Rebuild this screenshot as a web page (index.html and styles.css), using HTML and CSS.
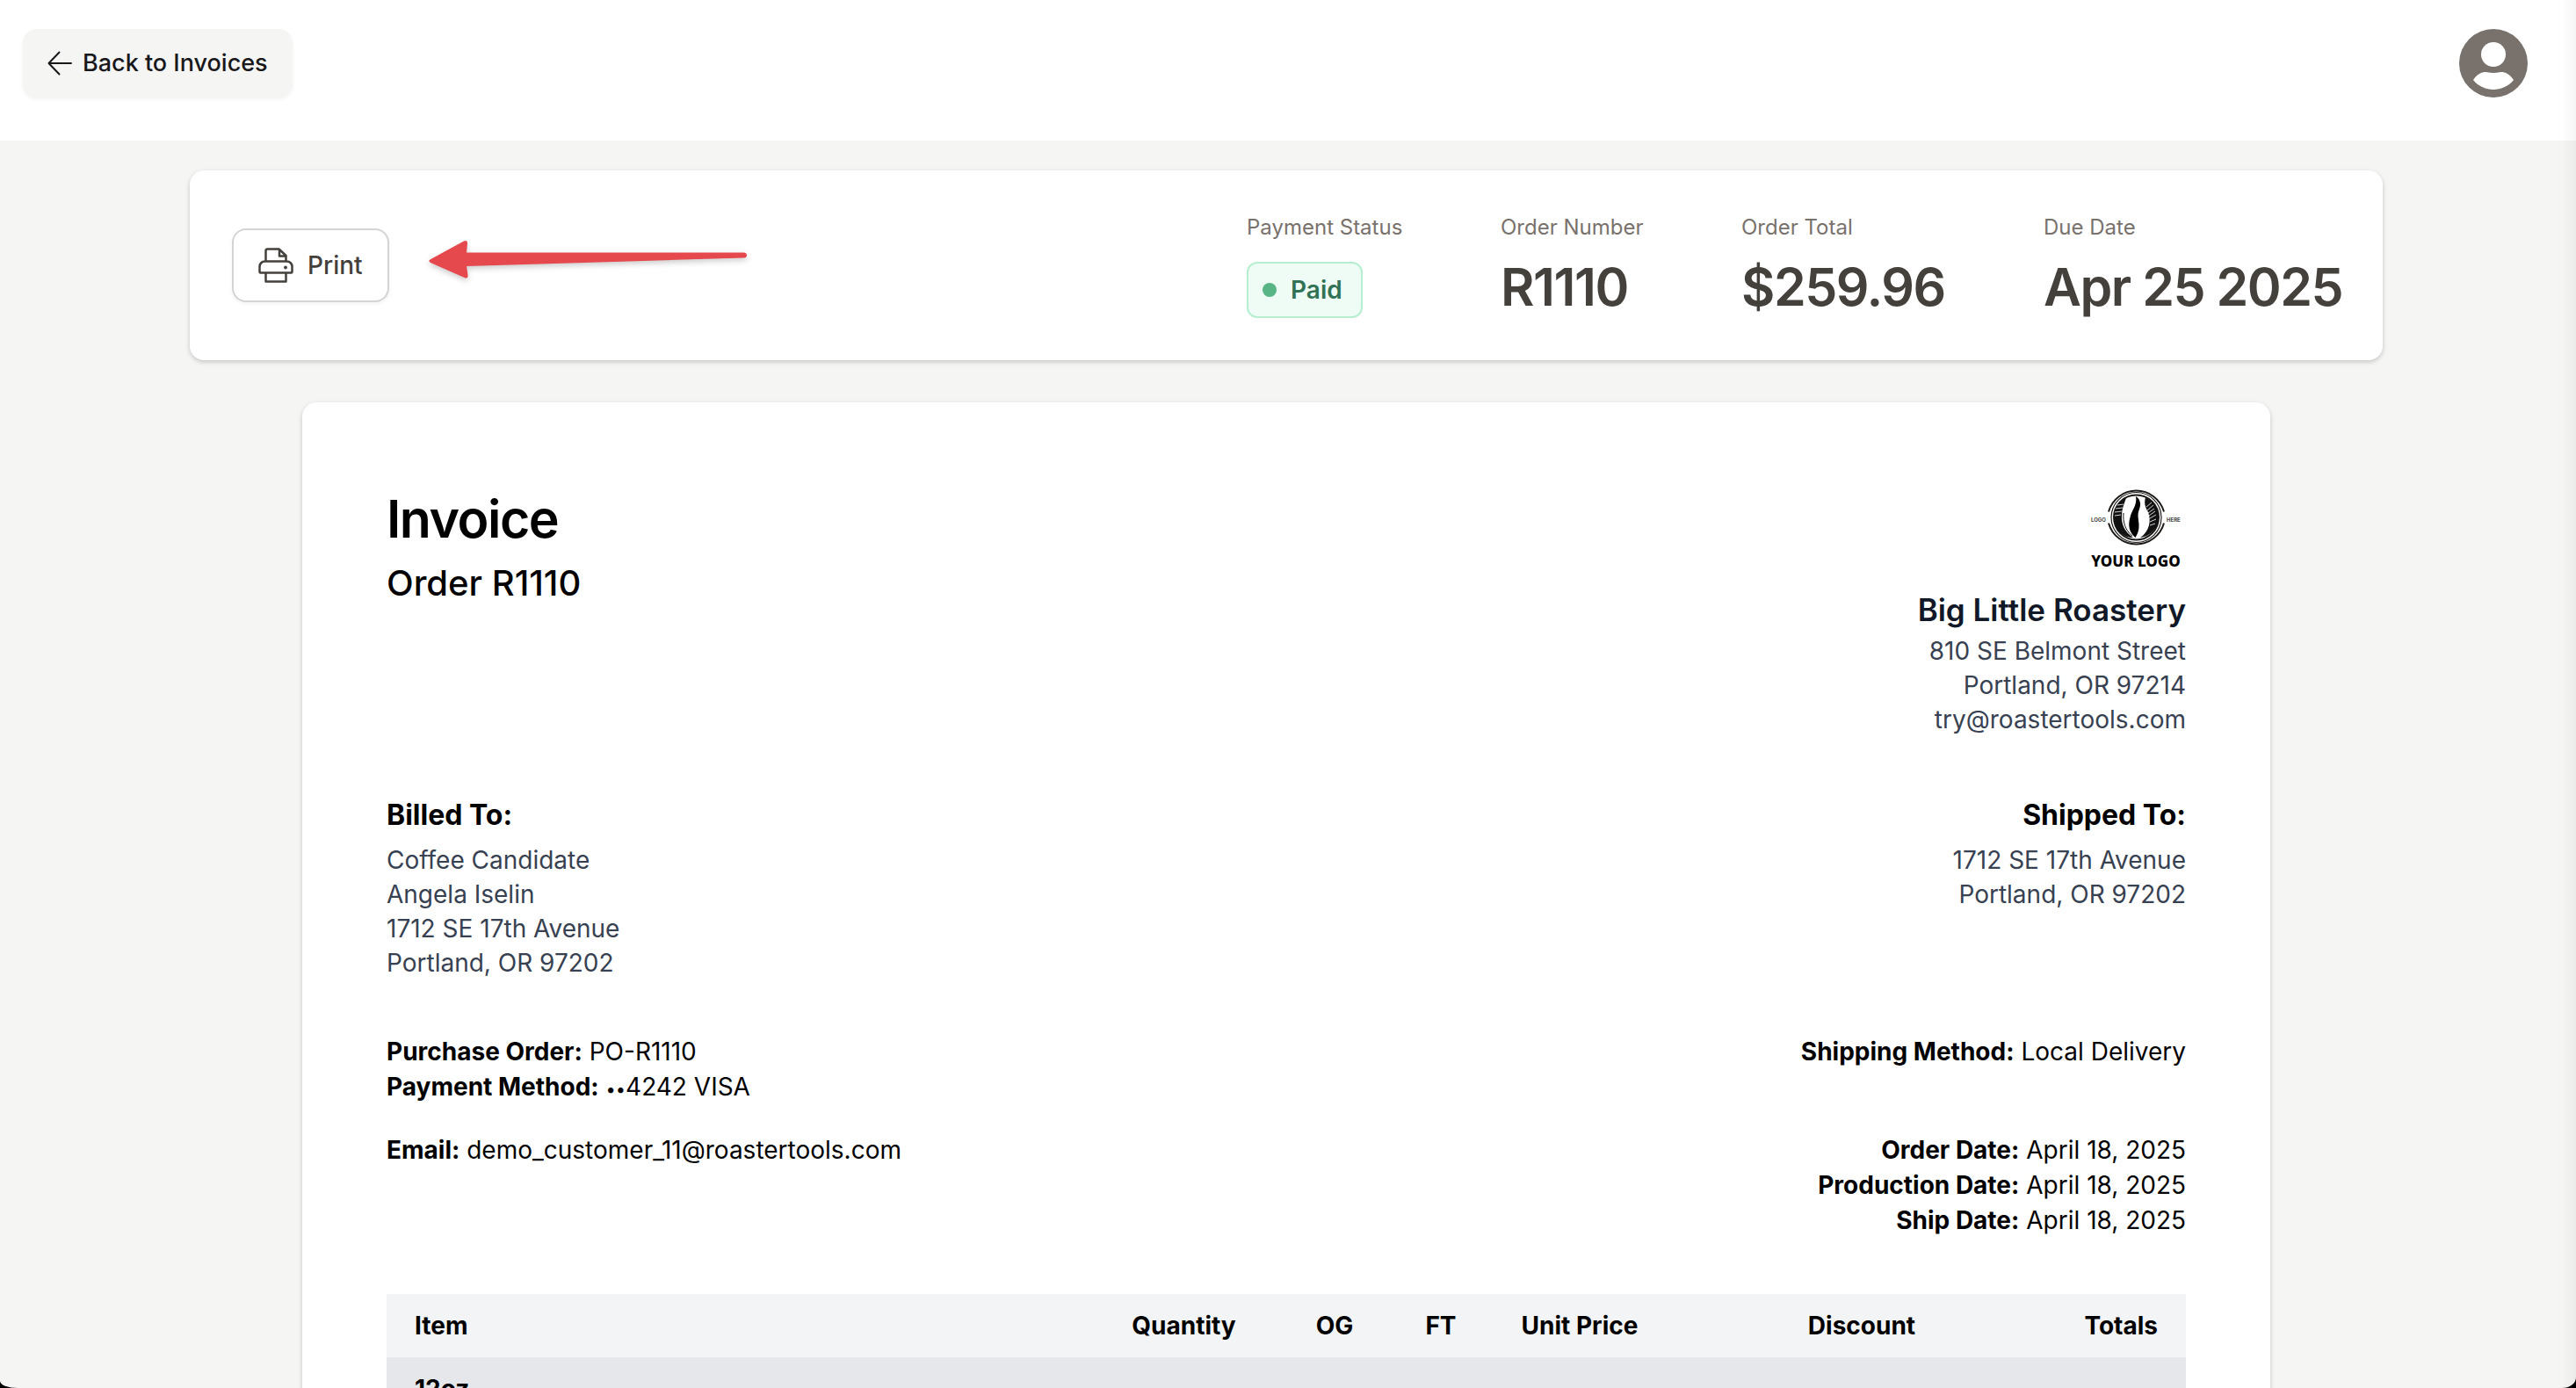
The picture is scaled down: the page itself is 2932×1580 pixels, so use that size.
FILE: index.html
```html
<!DOCTYPE html>
<html lang="en">
<head>
<meta charset="utf-8">
<meta name="viewport" content="width=device-width, initial-scale=1">
<title>Invoice R1110</title>
<link rel="stylesheet" href="styles.css">
</head>
<body>
<header class="topbar">
  <a class="back" href="#invoices">
    <svg class="back-icon" viewBox="0 0 28 28" aria-hidden="true"><path d="M27 14H1.500M13.500 1.500L1.500 14l12 12.500"/></svg>
    Back to Invoices
  </a>
  <button class="avatar" type="button" aria-label="Account">
    <svg viewBox="0 0 78 78" aria-hidden="true"><circle cx="39" cy="39" r="39" fill="#78716c"/><circle cx="39" cy="29" r="14" fill="#fff"/><path d="M16 58C21 50.500 27 48.500 32 49.200Q39 50.600 46 49.200C51 48.500 57 50.500 62 58C56 65.500 47 69 39 69S22 65.500 16 58Z" fill="#fff"/></svg>
  </button>
</header>

<main class="page">
  <section class="summary">
    <div class="actions">
      <button class="print" type="button">
        <svg class="print-icon" viewBox="0 0 40 40" aria-hidden="true"><path d="M8.500 16V3.500a2 2 0 0 1 2-2H23.500l8 7.500v7M24 2v7.500H31.500M8.500 28.500H2.500a1 1 0 0 1-1-1v-6a6 6 0 0 1 6-6h25a6 6 0 0 1 6 6v6a1 1 0 0 1-1 1h-6M8.500 28.500h23V38.500h-23z"/><circle cx="31" cy="22.500" r="1.900"/></svg>
        Print
      </button>
      <svg class="arrow" viewBox="0 0 364 52" aria-hidden="true"><path d="M2.500 23.500L41 2.500Q45 1 45 5L44 15.500H360Q363 16 363 18.500T360 21.500L44 31L45.500 41Q46 46 41.500 44L3 27Q0 25 2.500 23.500Z"/></svg>
    </div>
    <dl class="stats">
      <div><dt>Payment Status</dt><dd class="badge">Paid</dd></div>
      <div><dt>Order Number</dt><dd class="value">R1110</dd></div>
      <div><dt>Order Total</dt><dd class="value">$259.96</dd></div>
      <div><dt>Due Date</dt><dd class="value">Apr 25 2025</dd></div>
    </dl>
  </section>

  <article class="invoice">
    <div class="split head">
      <div>
        <h1>Invoice</h1>
        <p class="order">Order R1110</p>
      </div>
      <div class="right">
        <svg class="logo" viewBox="0 0 112 96" role="img" aria-label="Your Logo">
          <g fill="none" stroke="#1c1917">
            <path d="M24 28.500A32.700 32.700 0 0 1 87 28.500M24 41.500A32.700 32.700 0 0 0 87 41.500" stroke-width="2"/>
            <circle cx="55.500" cy="35" r="28.500" stroke-width="1.200"/>
            <circle cx="55.500" cy="35" r="25.500" stroke-width="2"/>
          </g>
          <g transform="translate(0 -1)">
            <path d="M44 13.500C29 20 25 44 38 54C42 57 47 59 52 59C43 53 38 44 39 33C39.500 25 42 20 44 13.500Z" fill="#111"/>
            <path d="M66 13.500C64 20 66 25 69 30C73 40 70 52 60 59C69 58 78 51 80 42C83 29 77 18 66 13.500Z" fill="#111"/>
            <path d="M55 12C61 16 61 22 58.500 28C55 37 63 46 54.500 59C47 53 46 44 48.500 36C50 28 57 22 55 12Z" fill="#000"/>
            <path d="M41 31C40 41 43 51 51 57" fill="none" stroke="#111"/>
            <path d="M67 24l6-5M68 28l7-6M69 31l7-5M70 34l7-5M71 37l7-4M71 41l7-3M71 45l6-2M34 22l7-1M32 26l8-1M31 30l8-1M31 34l7-1" fill="none" stroke="#fff" stroke-width=".8"/>
          </g>
          <text class="logo-side" x="4" y="40">LOGO</text>
          <text class="logo-side" x="90" y="40">HERE</text>
          <text class="logo-name" x="55" y="91" text-anchor="middle">YOUR LOGO</text>
        </svg>
        <h2 class="company">Big Little Roastery</h2>
        <address>810 SE Belmont Street<br>Portland, OR 97214<br>try@roastertools.com</address>
      </div>
    </div>

    <div class="split parties">
      <div>
        <h3>Billed To:</h3>
        <address>Coffee Candidate<br>Angela Iselin<br>1712 SE 17th Avenue<br>Portland, OR 97202</address>
      </div>
      <div class="right">
        <h3>Shipped To:</h3>
        <address>1712 SE 17th Avenue<br>Portland, OR 97202</address>
      </div>
    </div>

    <div class="split methods">
      <div>
        <p><b>Purchase Order:</b> PO-R1110</p>
        <p><b>Payment Method:</b> <span class="mask">••</span>4242 VISA</p>
      </div>
      <div class="right">
        <p><b>Shipping Method:</b> Local Delivery</p>
      </div>
    </div>

    <div class="split dates">
      <div>
        <p><b>Email:</b> demo_customer_11@roastertools.com</p>
      </div>
      <div class="right">
        <p><b>Order Date:</b> April 18, 2025</p>
        <p><b>Production Date:</b> April 18, 2025</p>
        <p><b>Ship Date:</b> April 18, 2025</p>
      </div>
    </div>

    <table class="items">
      <colgroup><col><col class="c-qty"><col class="c-og"><col class="c-ft"><col class="c-unit"><col class="c-disc"><col class="c-total"></colgroup>
      <thead>
        <tr><th class="start" scope="col">Item</th><th scope="col">Quantity</th><th scope="col">OG</th><th scope="col">FT</th><th scope="col">Unit Price</th><th scope="col">Discount</th><th class="end" scope="col">Totals</th></tr>
      </thead>
      <tbody>
        <tr><th class="start" scope="rowgroup" colspan="7">12oz</th></tr>
      </tbody>
    </table>
  </article>
</main>
<div class="window-frame" aria-hidden="true"></div>
</body>
</html>
```
FILE: styles.css
```css
* { box-sizing: border-box; margin: 0; padding: 0; }

html { background: #f5f5f4; }

body {
  height: 100vh;
  overflow: hidden;
  font-family: Inter, "Liberation Sans", sans-serif;
  font-size: 28px;
  line-height: 40px;
  color: #000;
}

button { font: inherit; background: none; border: 0; }

/* Top bar */
.topbar {
  display: flex;
  justify-content: space-between;
  align-items: flex-start;
  height: 160px;
  padding: 33px 55px 0 26px;
  background: #fff;
}

.back {
  display: flex;
  align-items: center;
  gap: 12px;
  height: 78px;
  padding: 0 28px;
  border-radius: 16px;
  background: #f5f5f4;
  box-shadow: 0 2px 4px rgba(0, 0, 0, .05);
  color: #18181b;
  font-size: 27px;
  font-weight: 500;
  text-decoration: none;
}

.back-icon {
  width: 28px;
  height: 28px;
  fill: none;
  stroke: currentColor;
  stroke-width: 2;
  stroke-linecap: round;
  stroke-linejoin: round;
}

.avatar { width: 78px; height: 78px; }
.avatar svg { display: block; }

/* Summary card */
.page { padding: 34px 220px 0 216px; }

.summary {
  display: flex;
  justify-content: space-between;
  align-items: center;
  height: 216px;
  padding: 0 56px 0 48px;
  border-radius: 16px;
  background: #fff;
  box-shadow: 0 2px 6px rgba(0, 0, 0, .1), 0 2px 4px rgba(0, 0, 0, .1);
}

.actions { display: flex; align-items: center; gap: 44px; }

.print {
  display: flex;
  align-items: center;
  gap: 16px;
  height: 84px;
  padding: 0 28px;
  border: 2px solid #d4d4d4;
  border-radius: 16px;
  background: #fff;
  box-shadow: 0 2px 4px rgba(0, 0, 0, .05);
  color: #44403c;
  font-weight: 500;
}

.print-icon {
  width: 40px;
  height: 40px;
  fill: none;
  stroke: currentColor;
  stroke-width: 2.500;
  stroke-linejoin: round;
}
.print-icon circle { fill: currentColor; stroke: none; }

.arrow {
  width: 364px;
  height: 52px;
  margin-bottom: 8px;
  fill: #e5484d;
  filter: drop-shadow(0 3px 3px rgba(0, 0, 0, .2));
}

.stats {
  display: grid;
  grid-template-columns: 177px 162px 232px 330px;
  column-gap: 112px;
  height: 118px;
}

.stats dt {
  color: #78716c;
  font-size: 24px;
  line-height: 32px;
  white-space: nowrap;
}

.value {
  margin-top: 16px;
  color: #44403c;
  font-size: 59px;
  font-weight: 600;
  line-height: 72px;
  letter-spacing: -.025em;
  white-space: nowrap;
}

.badge {
  display: flex;
  align-items: center;
  gap: 16px;
  width: 132px;
  height: 64px;
  margin-top: 23px;
  padding-left: 16px;
  border: 2px solid #b5efd0;
  border-radius: 12px;
  background: #effcf6;
  color: #317256;
  font-weight: 600;
}
.badge::before {
  content: "";
  width: 16px;
  height: 16px;
  border-radius: 50%;
  background: #57b586;
}

/* Invoice sheet */
.invoice {
  margin: 48px 128px 0;
  padding: 96px;
  border-radius: 16px;
  background: #fff;
  box-shadow: 0 2px 6px rgba(0, 0, 0, .1), 0 2px 4px rgba(0, 0, 0, .1);
}

.split { display: flex; justify-content: space-between; }
.right { text-align: right; }

h1 {
  font-size: 59px;
  font-weight: 600;
  line-height: 74px;
  letter-spacing: -.025em;
}
.order { font-size: 40px; font-weight: 500; line-height: 72px; }

.logo { display: block; width: 112px; height: 96px; margin-left: auto; }
.logo-side { font-size: 6px; font-weight: 700; fill: #444; }
.logo-name { font-family: "Noto Sans", sans-serif; font-size: 17px; font-weight: 800; }

.company {
  margin-top: 20px;
  color: #111827;
  font-size: 35px;
  font-weight: 600;
  line-height: 48px;
}

address {
  margin-top: 4px;
  color: #374151;
  font-style: normal;
  line-height: 39px;
}

.parties { margin-top: 65px; }
.parties address { margin-top: 8px; }
h3 { font-size: 32px; font-weight: 700; line-height: 48px; }

.methods { margin-top: 61px; }
.dates { margin-top: 32px; }
b { font-weight: 700; }
.mask { font-size: 20px; line-height: 20px; }

/* Line items */
.items {
  width: 100%;
  margin-top: 64px;
  border-collapse: collapse;
  table-layout: fixed;
}
.items th { padding: 16px 0; font-weight: 700; line-height: 40px; text-align: center; }
.items .start { padding-left: 32px; text-align: left; }
.items .end { padding-right: 32px; text-align: right; }
.items thead { background: #f3f4f6; }
.items tbody { background: #e5e7eb; }

.c-qty { width: 183px; }
.c-og { width: 160px; }
.c-ft { width: 82px; }
.c-unit { width: 234px; }
.c-disc { width: 408px; }
.c-total { width: 165px; }

/* Window edge: rounded dark corners and a soft shade on the right */
.window-frame {
  position: fixed;
  inset: 0;
  border-radius: 0 0 16px 20px / 0 0 12px 8px;
  background: linear-gradient(to left, rgba(0, 0, 0, .04), transparent 16px);
  box-shadow: 0 0 0 20px #000;
  pointer-events: none;
}
```
